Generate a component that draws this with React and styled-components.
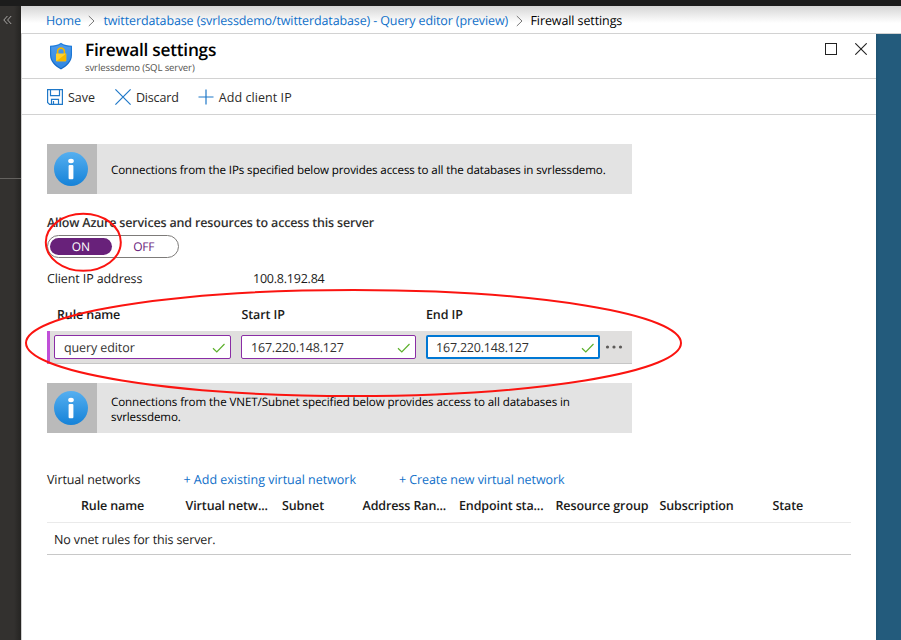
import React from "react";
import styled, { createGlobalStyle } from "styled-components";

const Global = createGlobalStyle`
  *, *::before, *::after { box-sizing: border-box; }
  html, body { margin: 0; padding: 0; background: #fff; }
  body {
    font-family: "Open Sans", "Noto Sans", sans-serif;
    font-size: 12.5px;
    letter-spacing: -0.11px;
    line-height: 18px;
    color: #1b1a19;
    text-rendering: geometricPrecision;
  }
`;

const Page = styled.div`
  position: relative;
  display: grid;
  grid-template-rows: 6px 1fr;
  width: 901px;
  height: 640px;
  overflow: hidden;
`;
const TopBar = styled.div`
  background: #1c1c1c;
`;
const Shell = styled.div`
  display: grid;
  grid-template-columns: 21px 1fr;
  min-height: 0;
`;
const Rail = styled.aside`
  background: linear-gradient(90deg, #33312f 0, #33312f 14px, #252422 21px);
`;
const RailTop = styled.div`
  display: flex;
  height: 173px;
  padding: 9px 0 0 3px;
  border-bottom: 1px solid #64625f;
`;
const Main = styled.div`
  display: grid;
  grid-template-rows: 28px 1fr;
  min-width: 0;
`;
const Breadcrumb = styled.nav`
  display: flex;
  align-items: center;
  padding: 2px 0 0 25px;
  border-bottom: 1px solid #d2d2d2;
  background: linear-gradient(#d6d6d6, #fff 17px);
  white-space: nowrap;
`;
const Crumb = styled.a`
  color: ${(p) => (p.$current ? "#000" : "#0f6fc9")};
  letter-spacing: ${(p) => p.$track || "-0.1px"};
`;
const Chevron = styled.svg`
  flex: none;
  width: 7px;
  height: 12px;
  margin: 0 8px 0 7.5px;
`;
const Workspace = styled.div`
  display: grid;
  grid-template-columns: 855px 1fr;
`;
const Blade = styled.section`
  border-left: 1px solid #cfcfcf;
  background: #fff;
`;
const Desktop = styled.div`
  background: linear-gradient(90deg, #1f5473, #235b7c 3px);
`;
const BladeHeader = styled.header`
  display: flex;
  height: 45px;
  padding: 7px 9px 0 27px;
  border-bottom: 1px solid #d2d2d2;
`;
const ShieldSlot = styled.div`
  padding-top: 1px;
`;
const Titles = styled.div`
  flex: 1;
  margin-left: 12px;
`;
const Title = styled.h1`
  margin: -2px 0 0;
  font-size: 17.3px;
  line-height: 24px;
  font-weight: 600;
  letter-spacing: -0.26px;
  color: #000;
`;
const Subtitle = styled.div`
  margin-top: -2px;
  font-size: 9.6px;
  line-height: 14px;
  letter-spacing: -0.12px;
  color: #55534f;
`;
const WindowButtons = styled.div`
  display: flex;
  gap: 18px;
  padding-top: 2px;
`;
const Toolbar = styled.div`
  display: flex;
  align-items: center;
  height: 36px;
  padding-left: 25px;
  border-bottom: 1px solid #d2d2d2;
`;
const Command = styled.button`
  display: flex;
  align-items: center;
  margin: 0 ${(p) => p.$after || 0}px 0 0;
  padding: 0;
  border: 0;
  background: none;
  font: inherit;
  letter-spacing: ${(p) => p.$track || "0"};
  color: #2b2a29;
`;
const CommandText = styled.span`
  padding: 2px 0 0 5px;
`;
const Content = styled.div`
  padding: 29px 25px 0;
`;
const Banner = styled.div`
  display: flex;
  width: 585px;
  height: 50px;
  background: #e3e3e3;
`;
const BannerIcon = styled.div`
  display: grid;
  place-items: center;
  width: 50px;
  padding: 0 2px 0 0;
  background: #bababa;
`;
const BannerText = styled.p`
  align-self: center;
  width: 510px;
  margin: ${(p) => p.$drop || 2}px 0 0 14px;
  font-size: 11.6px;
  line-height: 15px;
  letter-spacing: ${(p) => p.$track};
  color: #000;
`;
const Label = styled.div`
  margin-top: 20px;
  font-weight: 600;
  letter-spacing: -0.165px;
  color: #323130;
`;
const Toggle = styled.div`
  display: flex;
  width: 132px;
  height: 23px;
  margin-top: 3px;
  padding: 2px;
  border: 1px solid #7d7b79;
  border-radius: 12px;
`;
const ToggleOption = styled.span`
  width: ${(p) => (p.$on ? 63 : 66)}px;
  height: 17px;
  border-radius: 9px;
  font-size: 12px;
  line-height: 17px;
  text-align: center;
  letter-spacing: -0.2px;
  background: ${(p) => (p.$on ? "#68217a" : "transparent")};
  color: ${(p) => (p.$on ? "#fff" : "#68217a")};
`;
const ClientIp = styled.div`
  display: grid;
  grid-template-columns: 206px 1fr;
  margin-top: 12px;
  color: #1b1a19;
`;
const Address = styled.span`
  letter-spacing: -0.22px;
`;
const RuleHead = styled.div`
  display: grid;
  grid-template-columns: 184.5px 184.5px 1fr;
  margin-top: 18px;
  padding: 0 0 0 10px;
  font-weight: 600;
  color: #1b1a19;
`;
const RuleRow = styled.div`
  display: grid;
  grid-template-columns: 177px 175px 174px 1fr;
  column-gap: 10px;
  align-items: start;
  width: 585px;
  height: 33px;
  margin-top: 7px;
  padding-top: 4px;
  padding-left: 4px;
  border-left: 3px solid #c04fd8;
  border-bottom: 1px solid #c6c6c6;
  background: #e0dfde;
`;
const Field = styled.div`
  display: flex;
  align-items: center;
  justify-content: space-between;
  height: 24px;
  padding: 1px ${(p) => (p.$focused ? 3 : 4)}px 0 ${(p) => (p.$focused ? 8 : 9)}px;
  border: ${(p) => (p.$focused ? "2px solid #0078d4" : "1px solid #8a2da5")};
  border-radius: 2px;
  background: #fff;
  letter-spacing: ${(p) => p.$track};
  color: #323130;
`;
const More = styled.svg`
  width: 18px;
  height: 24px;
  margin-left: -5px;
`;
const BannerGap = styled.div`
  margin-top: 19px;
`;
const NetworkBar = styled.div`
  display: grid;
  grid-template-columns: 136.5px 215.5px 1fr;
  margin-top: 38px;
`;
const Link = styled.a`
  color: #0f6fc9;
  letter-spacing: ${(p) => p.$track};
`;
const NetworkHead = styled.div`
  display: grid;
  grid-template-columns: 104.5px 96.5px 80.5px 96.5px 96.5px 104px 113px 1fr;
  height: 34px;
  padding: 8px 0 0 34px;
  border-bottom: 1px solid #eaeaea;
  font-weight: 600;
  letter-spacing: -0.12px;
  white-space: nowrap;
`;
const NetworkEmpty = styled.div`
  height: 32px;
  padding: 8px 0 0 7px;
  border-bottom: 1px solid #c8c8c8;
  letter-spacing: -0.13px;
`;
const Markup = styled.svg`
  position: absolute;
  inset: 0;
  width: 901px;
  height: 640px;
  pointer-events: none;
`;

const Separator = () => (
  <Chevron viewBox="0 0 7 12" fill="none" stroke="#777">
    <path d="M.8 1 6 6 .8 11" />
  </Chevron>
);

const Check = () => (
  <svg width="14" height="12" viewBox="0 0 14 12" fill="none" stroke="#5db02c" strokeWidth="1.2">
    <path d="M1 6.3 4.8 10 12.500 2" />
  </svg>
);

const InfoIcon = ({ id }) => (
  <svg width="34" height="34" viewBox="0 0 34 34">
    <defs>
      <linearGradient id={id} x2="0" y2="1">
        <stop stopColor="#55aff0" />
        <stop offset="1" stopColor="#1582d8" />
      </linearGradient>
    </defs>
    <circle cx="17" cy="17" r="17" fill={`url(#${id})`} />
    <ellipse cx="17" cy="9" rx="2.8" ry="2.2" fill="#fff" />
    <rect x="14.6" y="13" width="4.8" height="14.3" rx="1" fill="#fff" />
  </svg>
);

const ShieldIcon = () => (
  <svg width="24" height="28" viewBox="0 0 24 28">
    <defs>
      <linearGradient id="shield" x2="0" y2="1">
        <stop stopColor="#1f7ede" />
        <stop offset="1" stopColor="#1568c4" />
      </linearGradient>
      <linearGradient id="shieldFace" x2="0" y2="1">
        <stop stopColor="#4f9cec" />
        <stop offset="1" stopColor="#2f86e2" />
      </linearGradient>
    </defs>
    <path d="M12 .8C9 3.3 5 3.6 1 3.7V13c0 7 5.500 11.500 11 14.500C17.500 24.500 23 20 23 13V3.700C19 3.600 15 3.300 12 .8Z" fill="url(#shield)" />
    <path d="M12 2.200C9 4.300 5.500 4.700 2.200 4.800V13c0 6 4.800 10.300 9.800 13.200C17 23.300 21.800 19 21.800 13V4.800C18.500 4.700 15 4.300 12 2.200Z" fill="url(#shieldFace)" />
    <path d="M8.600 12V9.500a3.400 3.400 0 0 1 6.800 0V12" fill="none" stroke="#f0b400" strokeWidth="1.600" />
    <rect x="7" y="11.500" width="10.200" height="7.700" rx=".6" fill="#ffd02e" />
    <path d="M17.200 11.500v7.100a.6.6 0 0 1-.6.6H7.300Z" fill="#f5b800" />
  </svg>
);

export default function App() {
  return (
    <Page>
      <Global />
      <TopBar />
      <Shell>
        <Rail>
          <RailTop>
            <svg width="9" height="10" viewBox="0 0 9 10" fill="none" stroke="#aaa8a6">
              <path d="M4.400 1 .8 5l3.600 4M8.200 1 4.600 5l3.600 4" />
            </svg>
          </RailTop>
        </Rail>
        <Main>
          <Breadcrumb>
            <Crumb>Home</Crumb>
            <Separator />
            <Crumb $track="-0.122px">
              twitterdatabase (svrlessdemo/twitterdatabase) - Query editor (preview)
            </Crumb>
            <Separator />
            <Crumb $current>Firewall settings</Crumb>
          </Breadcrumb>
          <Workspace>
            <Blade>
              <BladeHeader>
                <ShieldSlot>
                  <ShieldIcon />
                </ShieldSlot>
                <Titles>
                  <Title>Firewall settings</Title>
                  <Subtitle>svrlessdemo (SQL server)</Subtitle>
                </Titles>
                <WindowButtons>
                  <svg width="12" height="12" fill="none" stroke="#222">
                    <rect x=".5" y=".5" width="11" height="11" />
                  </svg>
                  <svg width="12" height="12" fill="none" stroke="#222" strokeWidth="1.100">
                    <path d="m.3.300 11.400 11.400M11.700.300.300 11.700" />
                  </svg>
                </WindowButtons>
              </BladeHeader>
              <Toolbar>
                <Command $after={20} $track="-0.05px">
                  <svg width="16" height="16" fill="none" stroke="#1f78c8" strokeWidth="1.200">
                    <path d="M.6.6h14.800v14.800H2.600l-2-2ZM3.500.6v6h9v-6M4.500 15.400v-5h7v5M6.500 12v3.400" />
                  </svg>
                  <CommandText>Save</CommandText>
                </Command>
                <Command $after={19} $track="-0.15px">
                  <svg width="16" height="16" fill="none" stroke="#1f78c8" strokeWidth="1.200">
                    <path d="m.4.400 15.200 15.200M15.600.400.400 15.600" />
                  </svg>
                  <CommandText>Discard</CommandText>
                </Command>
                <Command $track="0.07px">
                  <svg width="16" height="16" fill="none" stroke="#1f78c8" strokeWidth="1.200">
                    <path d="M8 .5v15M.5 8h15" />
                  </svg>
                  <CommandText>Add client IP</CommandText>
                </Command>
              </Toolbar>
              <Content>
                <Banner>
                  <BannerIcon>
                    <InfoIcon id="infoIps" />
                  </BannerIcon>
                  <BannerText $track="-0.12px">
                    Connections from the IPs specified below provides access to all the databases in svrlessdemo.
                  </BannerText>
                </Banner>
                <Label>Allow Azure services and resources to access this server</Label>
                <Toggle>
                  <ToggleOption $on>ON</ToggleOption>
                  <ToggleOption>OFF</ToggleOption>
                </Toggle>
                <ClientIp>
                  <span>Client IP address</span>
                  <Address>100.8.192.84</Address>
                </ClientIp>
                <RuleHead>
                  <span>Rule name</span>
                  <span>Start IP</span>
                  <span>End IP</span>
                </RuleHead>
                <RuleRow>
                  <Field $track="-0.1px">query editor<Check /></Field>
                  <Field $track="-0.2px">167.220.148.127<Check /></Field>
                  <Field $focused $track="-0.2px">167.220.148.127<Check /></Field>
                  <More viewBox="0 0 18 24" fill="#5d5b59">
                    <circle cx="2.500" cy="12" r="1.600" />
                    <circle cx="9" cy="12" r="1.600" />
                    <circle cx="15.500" cy="12" r="1.600" />
                  </More>
                </RuleRow>
                <BannerGap>
                  <Banner>
                    <BannerIcon>
                      <InfoIcon id="infoVnet" />
                    </BannerIcon>
                    <BannerText $drop={3} $track="-0.09px">
                      Connections from the VNET/Subnet specified below provides access to all databases in
                      svrlessdemo.
                    </BannerText>
                  </Banner>
                </BannerGap>
                <NetworkBar>
                  <span>Virtual networks</span>
                  <Link $track="-0.01px">+ Add existing virtual network</Link>
                  <Link $track="-0.08px">+ Create new virtual network</Link>
                </NetworkBar>
                <NetworkHead>
                  <span>Rule name</span>
                  <span>Virtual netw...</span>
                  <span>Subnet</span>
                  <span>Address Ran...</span>
                  <span>Endpoint sta...</span>
                  <span>Resource group</span>
                  <span>Subscription</span>
                  <span>State</span>
                </NetworkHead>
                <NetworkEmpty>No vnet rules for this server.</NetworkEmpty>
              </Content>
            </Blade>
            <Desktop />
          </Workspace>
        </Main>
      </Shell>
      <Markup fill="none" stroke="#fb1410" strokeWidth="2">
        <ellipse cx="83.300" cy="242.300" rx="37.500" ry="28.500" />
        <ellipse cx="353.500" cy="343" rx="327.500" ry="53" />
      </Markup>
    </Page>
  );
}
